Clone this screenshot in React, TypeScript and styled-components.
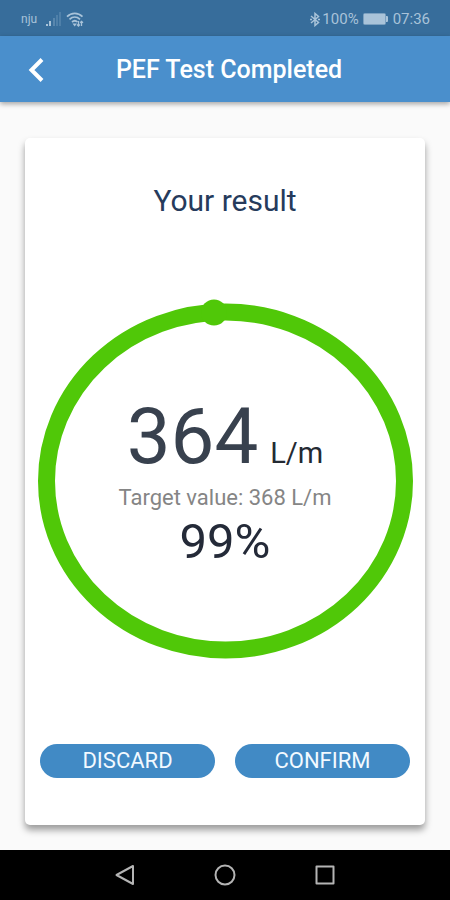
import React from "react";
import styled, { createGlobalStyle } from "styled-components";

const GlobalStyle = createGlobalStyle`
  * { box-sizing: border-box; }
  body { margin: 0; background: #fafafa; font-family: Roboto, sans-serif; }
  button { font-family: inherit; border: 0; padding: 0; cursor: pointer; }
  h1, h2, p { margin: 0; font-weight: 400; }
`;

const Screen = styled.div`
  min-height: 100vh;
  display: flex;
  flex-direction: column;
`;

const StatusBar = styled.div`
  height: 36px;
  padding: 2px 20px 0 21px;
  display: flex;
  align-items: center;
  justify-content: space-between;
  background: #376d9b;
  color: #a9c3d9;
  font-size: 15px;
  line-height: 20px;
`;

const StatusGroup = styled.div<{ $gap: number }>`
  display: flex;
  align-items: center;
  gap: ${(p) => p.$gap}px;
`;

const Carrier = styled.span`
  font-size: 12px;
  margin-right: 4px;
`;

const Header = styled.header`
  height: 66px;
  padding: 2px 20px 0;
  display: grid;
  grid-template-columns: 32px 1fr 32px;
  align-items: center;
  background: #4a8fcc;
  color: #fff;
  box-shadow: 0 2px 5px rgba(0, 0, 0, 0.35);
`;

const BackButton = styled.button`
  height: 40px;
  display: grid;
  place-items: center;
  background: none;
  color: inherit;
`;

const HeaderTitle = styled.h1`
  font-size: 25px;
  line-height: 32px;
  font-weight: 500;
  text-align: center;
  padding-left: 8px;
`;

const Main = styled.main`
  flex: 1;
  display: flex;
  padding: 36px 25px 25px;
`;

const Card = styled.section`
  flex: 1;
  display: flex;
  flex-direction: column;
  justify-content: space-between;
  padding: 47px 12px;
  border-radius: 5px;
  background: #fff;
  box-shadow: 0 5px 7px rgba(0, 0, 0, 0.38);
`;

const CardTitle = styled.h2`
  color: #263b5c;
  font-size: 30px;
  line-height: 32px;
  text-align: center;
`;

const Gauge = styled.div`
  display: grid;
  place-items: center;
  > * { grid-area: 1 / 1; }
`;

const Ring = styled.svg`
  display: block;
  width: 100%;
  height: auto;
`;

const Reading = styled.div`
  display: flex;
  flex-direction: column;
  align-items: center;
`;

const ValueLine = styled.p`
  display: flex;
  align-items: baseline;
  gap: 12px;
`;

const Value = styled.span`
  color: #38414e;
  font-size: 78px;
  line-height: 96px;
`;

const Unit = styled.span`
  color: #242a33;
  font-size: 29px;
  line-height: 32px;
`;

const Target = styled.p`
  color: #858585;
  font-size: 22px;
  line-height: 26px;
`;

const Percent = styled.p`
  color: #242a38;
  font-size: 49px;
  line-height: 62px;
`;

const Actions = styled.div`
  display: grid;
  grid-template-columns: 1fr 1fr;
  gap: 20px;
  padding: 0 3px;
`;

const ActionButton = styled.button`
  height: 34px;
  border-radius: 17px;
  background: #418ac5;
  color: #f2f9ff;
  font-size: 22px;
  line-height: 34px;
`;

const SystemNav = styled.nav`
  height: 50px;
  display: flex;
  align-items: center;
  justify-content: center;
  gap: 76px;
  background: #000;
`;

const NavButton = styled.button`
  width: 24px;
  height: 24px;
  background: none;
  color: #b4b4b4;
`;

const NavIcon = styled.svg`
  display: block;
  fill: none;
  stroke: currentColor;
  stroke-width: 2;
  stroke-linejoin: round;
`;

const SignalIcon = () => (
  <svg width="17" height="15" viewBox="0 0 17 15" fill="currentColor" aria-hidden="true">
    <rect x="1" y="12" width="2" height="2" />
    <rect x="4" y="9" width="2" height="5" />
    <rect x="8" y="6" width="2" height="8" opacity=".3" />
    <rect x="11" y="3" width="2" height="11" opacity=".22" />
    <rect x="14" y="0" width="2" height="14" opacity=".22" />
  </svg>
);

const WifiIcon = () => (
  <svg width="18" height="15" viewBox="0 0 18 15" fill="none" stroke="currentColor" strokeWidth="1.7" aria-hidden="true">
    <path d="M1 4.7C5.5.2 12 .2 16.5 4.7M3.500 7.400c3.100-3 7.400-3 10.500 0M6 10c1.800-1.600 3.800-1.600 5.500 0" />
    <path d="m6.500 11.500 2.200 3 2.200-3z" fill="currentColor" stroke="none" />
    <path d="M12.500 9v5m-1.500-1.500 1.500 1.500 1.300-1.500M15.500 14V9.500m-1.300 1.300 1.300-1.300 1.500 1.300" strokeWidth="1.3" />
  </svg>
);

const BluetoothIcon = () => (
  <svg width="10" height="15" viewBox="0 0 10 15" fill="none" stroke="currentColor" strokeWidth="1.5" aria-hidden="true">
    <path d="m1 4 7.500 6.500L5 13.500v-12l3.500 3L1 11" />
    <path d="M0 7.500h2M8 7.500h2" />
  </svg>
);

const BatteryIcon = () => (
  <svg width="26" height="12" viewBox="0 0 26 12" aria-hidden="true">
    <rect x=".5" y=".5" width="22" height="11" rx="1" fill="none" stroke="currentColor" opacity=".6" />
    <rect x="1" y="1" width="21" height="10" fill="currentColor" />
    <path d="M23 3h1q1 0 1 1v4q0 1-1 1h-1z" fill="currentColor" />
  </svg>
);

export default function App() {
  return (
    <Screen>
      <GlobalStyle />
      <StatusBar>
        <StatusGroup $gap={4}>
          <Carrier>nju</Carrier>
          <SignalIcon />
          <WifiIcon />
        </StatusGroup>
        <StatusGroup $gap={4}>
          <StatusGroup $gap={2}>
            <BluetoothIcon />
            <span>100%</span>
          </StatusGroup>
          <BatteryIcon />
          <span>07:36</span>
        </StatusGroup>
      </StatusBar>
      <Header>
        <BackButton aria-label="Back">
          <svg width="18" height="26" viewBox="0 0 18 26" fill="none" stroke="currentColor" strokeWidth="4" aria-hidden="true">
            <path d="M15 2.500 4.500 13 15 23.500" />
          </svg>
        </BackButton>
        <HeaderTitle>PEF Test Completed</HeaderTitle>
      </Header>
      <Main>
        <Card>
          <CardTitle>Your result</CardTitle>
          <Gauge>
            <Ring viewBox="0 -2 376 366" fill="none" aria-hidden="true">
              <ellipse cx="188.5" cy="181" rx="179" ry="169" stroke="#50c808" strokeWidth="17" />
              <circle cx="177" cy="12.5" r="13" fill="#50c808" />
            </Ring>
            <Reading>
              <ValueLine>
                <Value>364</Value>
                <Unit>L/m</Unit>
              </ValueLine>
              <Target>Target value: 368 L/m</Target>
              <Percent>99%</Percent>
            </Reading>
          </Gauge>
          <Actions>
            <ActionButton>DISCARD</ActionButton>
            <ActionButton>CONFIRM</ActionButton>
          </Actions>
        </Card>
      </Main>
      <SystemNav aria-label="System">
        <NavButton aria-label="Back">
          <NavIcon width="24" height="24" viewBox="0 0 24 24"><path d="M20 3v18L3.500 12z" /></NavIcon>
        </NavButton>
        <NavButton aria-label="Home">
          <NavIcon width="24" height="24" viewBox="0 0 24 24"><circle cx="12" cy="12" r="9.500" /></NavIcon>
        </NavButton>
        <NavButton aria-label="Recent apps">
          <NavIcon width="24" height="24" viewBox="0 0 24 24"><rect x="3.500" y="3.500" width="17" height="17" /></NavIcon>
        </NavButton>
      </SystemNav>
    </Screen>
  );
}
